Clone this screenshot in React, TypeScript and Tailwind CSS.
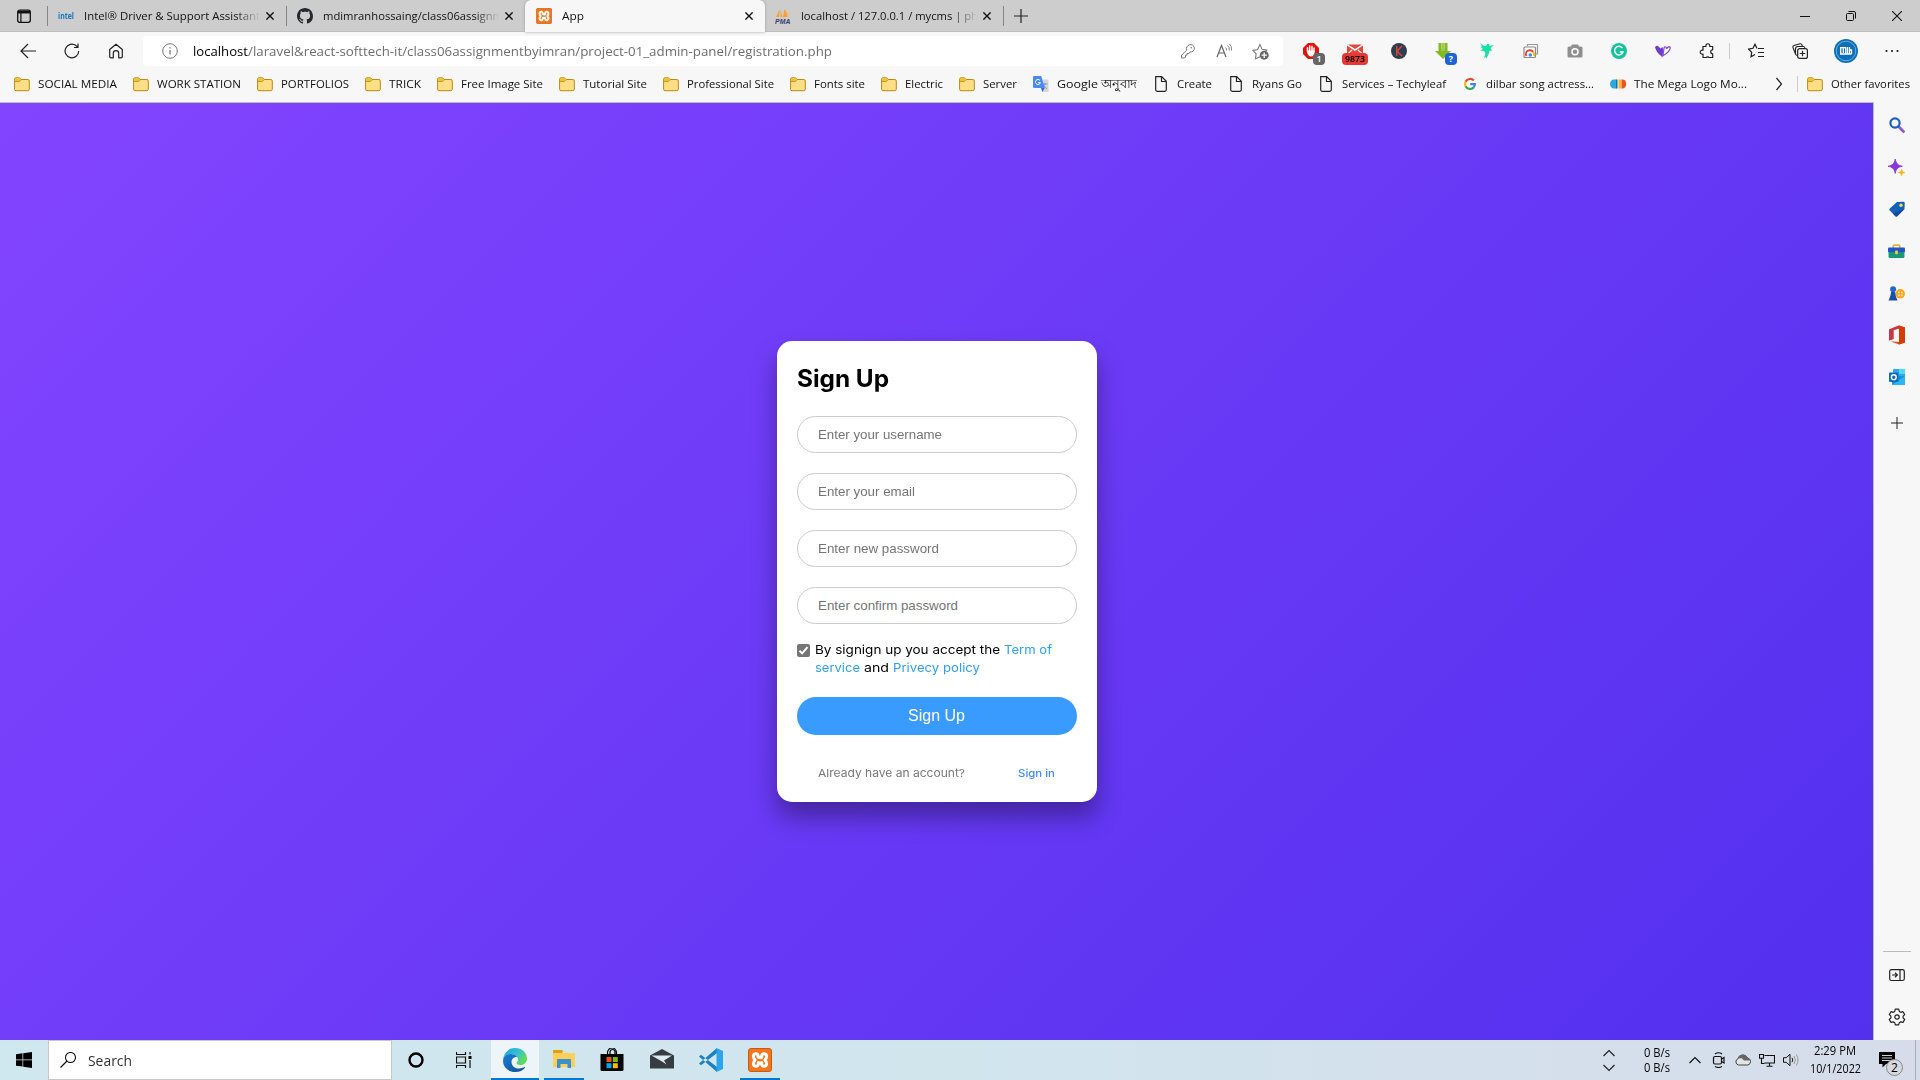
import React, { useLayoutEffect, useRef } from 'react';

type FitProps = { className?: string; children: React.ReactNode };

/** Single line of text, condensed or widened to fill the width its class gives. */
function Fit({ className = '', children }: FitProps) {
  const outer = useRef<HTMLSpanElement>(null);
  const inner = useRef<HTMLSpanElement>(null);
  useLayoutEffect(() => {
    const o = outer.current;
    const i = inner.current;
    if (!o || !i) return;
    i.style.transform = 'none';
    const natural = i.getBoundingClientRect().width;
    if (natural > 0) i.style.transform = `scaleX(${o.getBoundingClientRect().width / natural})`;
  }, []);
  return (
    <span ref={outer} className={`block shrink-0 whitespace-nowrap ${className}`}>
      <span ref={inner} className="inline-block origin-left whitespace-pre">
        {children}
      </span>
    </span>
  );
}

function Svg({ s = 16, vb = '0 0 16 16', className = '', children }: { s?: number; vb?: string; className?: string; children: React.ReactNode }) {
  return (
    <svg width={s} height={s} viewBox={vb} fill="none" className={`shrink-0 ${className}`}>
      {children}
    </svg>
  );
}

const Folder = () => (
  <Svg>
    <path d="M.6 3.2q0-1.4 1.4-1.4h3.4l1.8 1.7h6.6q1.5 0 1.5 1.5v8.3q0 1.4-1.5 1.4H2q-1.4 0-1.4-1.4z" fill="#ffdf85" stroke="#b98a0c" />
    <path d="M1.1 5.2V3.3q0-1 1-1h3.1l1.4 1.4-1.4 1.5z" fill="#f2c037" />
    <path d="M.9 5.5h4.5l1.8-1.8" stroke="#b98a0c" strokeWidth=".8" />
  </Svg>
);

const File = () => (
  <Svg>
    <path d="M2.7.7h6l4.6 4.6v8.5q0 1.5-1.5 1.5H4.2q-1.5 0-1.5-1.5zM8.5.8v4.7h4.7" stroke="#222" strokeWidth="1.2" />
  </Svg>
);

const GoogleG = () => (
  <Svg>
    <circle cx="8" cy="8" r="8" fill="#fff" />
    <path d="M11.8 4.6A5 5 0 0 0 3.6 5.7" stroke="#ea4335" strokeWidth="2.2" />
    <path d="M3.6 5.6a5 5 0 0 0 0 4.8" stroke="#fbbc05" strokeWidth="2.2" />
    <path d="M3.6 10.3a5 5 0 0 0 7.9 1.3" stroke="#34a853" strokeWidth="2.2" />
    <path d="M8.2 8.1H13a5 5 0 0 1-1.6 3.6" stroke="#4285f4" strokeWidth="2.2" />
  </Svg>
);

const Translate = () => (
  <Svg>
    <path d="M6 3.5h9.5V16H9z" fill="#d4d6da" />
    <path d="M9.5 8h5M12 6.8V8c-.4 2-1.4 3.4-3 4.4M10.5 9.5c1 1.5 2 2.4 3.5 3.2" stroke="#8a9bab" />
    <path d="M0 1.2Q0 0 1.2 0h7l3.5 12H1.2Q0 12 0 10.8z" fill="#4a8af4" />
    <path d="m8 12 3.7 0L9.4 16z" fill="#3168d8" />
    <path d="M7 4.5A2.5 2.5 0 1 0 7.4 6.6H5.3" stroke="#fff" />
  </Svg>
);

const MegaLogo = () => (
  <Svg>
    <path d="M5.500 3.500v9H4A4 4.500 0 0 1 4 3.500z" fill="#29a9e0" />
    <path d="M5.500 3.500h2v9h-2z" fill="#0b6fb8" />
    <path d="M8.500 3.500H11v9H8.500z" fill="#fdb813" />
    <path d="M11.500 3.500h1A3.200 4 0 0 1 12.500 12.500h-1z" fill="#f04e23" />
  </Svg>
);

const Xampp = ({ s = 16 }: { s?: number }) => (
  <Svg s={s} vb="0 0 24 24">
    <rect x=".5" y=".5" width="23" height="23" rx="2.500" fill="#f3761c" stroke="#c65c14" />
    <path
      d="M10 8.500V7.300Q9.700 5.800 8 5.800q-2.600 0-2.600 2.700 0 1.500 1.600 3.500-1.600 2-1.600 3.500 0 2.700 2.600 2.700 2 0 2.300-2v-1.700q1.700 1 3.400 0v1.700q.3 2 2.300 2 2.600 0 2.600-2.700 0-1.500-1.600-3.500 1.600-2 1.600-3.500 0-2.700-2.600-2.700-2 0-2.300 2v1.600q-1.700 1-3.700-.4"
      stroke="#fff"
      strokeWidth="3"
      strokeLinejoin="round"
      strokeLinecap="round"
    />
  </Svg>
);

const Github = () => (
  <Svg>
    <path fill="#24292f" d="M8 0C3.580 0 0 3.580 0 8c0 3.540 2.290 6.530 5.470 7.590.4.070.55-.17.55-.38 0-.19-.010-.82-.010-1.490-2.010.37-2.530-.49-2.690-.94-.09-.23-.48-.94-.82-1.130-.28-.15-.68-.52-.010-.53.63-.010 1.080.58 1.230.82.72 1.210 1.870.87 2.330.66.070-.52.28-.87.51-1.070-1.780-.2-3.640-.89-3.640-3.950 0-.87.31-1.590.82-2.150-.08-.2-.36-1.020.08-2.120 0 0 .67-.21 2.200.82.64-.18 1.320-.27 2-.27s1.360.09 2 .27c1.530-1.040 2.200-.82 2.200-.82.44 1.100.16 1.920.08 2.120.51.56.82 1.270.82 2.150 0 3.070-1.870 3.750-3.650 3.950.29.25.54.73.54 1.480 0 1.070-.010 1.930-.010 2.200 0 .21.15.46.55.38A8.010 8.010 0 0 0 16 8c0-4.420-3.580-8-8-8z" />
  </Svg>
);

const Pma = () => (
  <Svg>
    <path d="M4.500 1.500v7.500H1zM5.500 2 7.500 9h-2zM9.500 1c2 2.500 3 5 3 8H8z" fill="#f6a13a" />
    <path d="M12.500 3c1.500 2 2.200 4 2.500 6h-2z" fill="#f9bf74" />
    <text x="0" y="15.500" fontFamily="Liberation Sans" fontWeight="bold" fontStyle="italic" fontSize="6.800" textLength="15.500" fill="#3c3a6b">PMA</text>
  </Svg>
);

const CloseX = ({ className = '' }: { className?: string }) => (
  <Svg s={8} vb="0 0 8 8" className={className}>
    <path d="m.4.4 7.200 7.200M7.600.4.4 7.600" stroke="#111" strokeWidth="1.400" />
  </Svg>
);

function Tab({ icon, label, labelWidth, className = '', gap = 'ml-1.5', fade = true }: { icon: React.ReactNode; label: string; labelWidth: string; className?: string; gap?: string; fade?: boolean }) {
  return (
    <div className={`flex h-8 items-center pl-2.5 ${className}`}>
      {icon}
      <div className={`ml-2.5 w-[176px] ${fade ? '[mask-image:linear-gradient(to_right,black_86%,transparent_100%)]' : ''}`}>
        <Fit className={labelWidth}>{label}</Fit>
      </div>
      <CloseX className={gap} />
    </div>
  );
}

const Sep = ({ className = '' }: { className?: string }) => <div className={`w-px shrink-0 ${className}`} />;

function TabBar() {
  return (
    <div className="flex h-8 items-center bg-[#cdcdcd] shadow-[inset_0_-1px_0_#bfbfbf]">
      <div className="flex w-[47px] pl-4">
        <Svg>
          <rect x="1.700" y="2.200" width="12.600" height="12.100" rx="2" stroke="#111" strokeWidth="1.300" />
          <path d="M2 4.200h12" stroke="#111" strokeWidth="2.500" />
          <path d="M4.900 4v10" stroke="#111" strokeWidth="1.200" />
        </Svg>
      </div>
      <Sep className="h-5 bg-[#858585]" />
      <Tab
        icon={<span className="w-4 text-[8.500px] font-bold text-[#1478be]"><Fit className="w-4">intel</Fit></span>}
        label="Intel® Driver & Support Assistant"
        labelWidth="w-[176px]"
        className="w-[238px]"
      />
      <Sep className="h-5 bg-[#858585]" />
      <Tab icon={<Github />} label="mdimranhossaing/class06assignm" labelWidth="w-[180px]" className="w-[238px]" />
      <Tab icon={<Xampp />} label="App" labelWidth="w-[22px]" gap="ml-[7px]" className="w-[240px] rounded-t-md bg-[#f7f7f7] pl-[11px] shadow-[0_0_3px_#999]" fade={false} />
      <Tab icon={<Pma />} label="localhost / 127.0.0.1 / mycms | ph" labelWidth="w-[177px]" className="w-[238px]" />
      <Sep className="h-5 bg-[#858585]" />
      <Svg className="ml-[9px]">
        <path d="M8 1v14M1 8h14" stroke="#222" strokeWidth="1.200" />
      </Svg>
      <div className="ml-auto flex">
        <div className="flex w-[46px] justify-center"><Svg s={10} vb="0 0 10 10"><path d="M0 5.500h10" stroke="#111" /></Svg></div>
        <div className="flex w-[46px] justify-center">
          <Svg s={10} vb="0 0 10 10"><rect x=".5" y="2.500" width="7" height="7" rx="1" stroke="#111" /><path d="M2.500.5H8q1.500 0 1.500 1.500v5.500" stroke="#111" /></Svg>
        </div>
        <div className="flex w-[46px] justify-center"><Svg s={10} vb="0 0 10 10"><path d="m0 0 10 10M10 0 0 10" stroke="#111" strokeWidth="1.100" /></Svg></div>
      </div>
    </div>
  );
}

function Ext({ children, badge }: { children: React.ReactNode; badge?: React.ReactNode }) {
  return (
    <div className="relative flex h-7 w-11 shrink-0 items-center justify-center">
      {children}
      {badge}
    </div>
  );
}

function Toolbar() {
  return (
    <div className="flex h-[38px] items-center">
      <div className="flex w-[143px] shrink-0 items-center pl-1.5">
        <Ext><Svg><path d="M8 1 1 8l7 7M1 8h15" stroke="#222" strokeWidth="1.200" /></Svg></Ext>
        <Ext><Svg><path d="M14.700 8A6.800 6.800 0 1 1 12 2.600l1.800 1.700M14 .5v4h-4" stroke="#222" strokeWidth="1.200" /></Svg></Ext>
        <Ext><Svg><path d="m8 1.200 6.300 5.300v7q0 1.300-1.300 1.300h-2.300v-4.500a2.700 2.700 0 0 0-5.400 0v4.500H3q-1.300 0-1.300-1.300v-7z" stroke="#222" strokeWidth="1.200" strokeLinejoin="round" /></Svg></Ext>
      </div>
      <div className="flex h-[30px] w-[1140px] shrink-0 items-center rounded bg-white pl-[19px] text-[13.500px]">
        <Svg><circle cx="8" cy="8" r="7.300" stroke="#777" /><path d="M8 7v4.500M8 4.200v1.400" stroke="#777" strokeWidth="1.300" /></Svg>
        <Fit className="ml-[15px] w-[55px] text-black">localhost</Fit>
        <Fit className="w-[584px] text-[#6e6e6e]">/laravel&react-softtech-it/class06assignmentbyimran/project-01_admin-panel/registration.php</Fit>
        <div className="ml-auto flex gap-5 pr-3.5">
          <Svg><path d="M9.500 1.800a3.700 3.700 0 1 1 .8 7.200L8.700 10.500H7v1.700H5.500V14L4.500 15H1.500v-2.700l5.200-5.200a4 4 0 0 1 2.800-5.300z" stroke="#777" /><circle cx="11.300" cy="4.700" r=".8" fill="#777" /></Svg>
          <Svg><path d="M1 14 5.500 2.500 10 14M2.700 10h5.600" stroke="#666" strokeWidth="1.200" /><path d="M9.500 4.500q1.300 1 1 3M11.500 2.500q2.300 1.700 1.800 5M13.500 1q2.700 2.500 2 6.500" stroke="#777" strokeWidth=".9" /></Svg>
          <Svg s={17}><path d="M7.500 13 3.200 15l.7-4.700L.8 7l4.500-.8L7.500 1.500l2 4.500 4.500.7-1.500 1.500" stroke="#777" /><circle cx="11.500" cy="11.500" r="4.200" fill="#666" /><path d="M11.500 9v5M9 11.500h5" stroke="#fff" strokeWidth="1.200" /></Svg>
        </div>
      </div>
      <div className="flex items-center pl-1.5">
        <Ext badge={<span className="absolute top-4 left-6 flex h-3 w-3 items-center justify-center rounded-sm bg-[#666] text-[9px] font-semibold text-white">1</span>}>
          <Svg><path d="M5 0h6l5 5v6l-5 5H5l-5-5V5z" fill="#e3120b" /><path d="M4.500 8V4.800M6.700 8V3M9 8V3.300M11 8.500V5" stroke="#fff" strokeWidth="1.500" strokeLinecap="round" /><path d="M4 7.500h7.800c0 4-1.500 6-3.800 6S4 11 4 7.500z" fill="#fff" /></Svg>
        </Ext>
        <Ext badge={<span className="absolute top-4 left-[9px] flex h-3 w-[26px] items-center justify-center rounded-sm bg-[#e53935] text-[9.500px] font-semibold text-black"><Fit className="w-5">9873</Fit></span>}>
          <Svg><path d="M1 1.500h14L8 6zM0 2.500 8 8l8-5.500V13H0z" fill="#e2483d" /><path d="M0 11.500 5 7M16 11.500 11 7" stroke="#f7f7f7" strokeWidth="1.200" /></Svg>
        </Ext>
        <Ext><Svg><circle cx="8" cy="8" r="8" fill="#2d3e4e" /><path d="M5.700 3v10M11 3 6 8.200l5 4.800" stroke="#d8443c" strokeWidth="1.500" /></Svg></Ext>
        <Ext badge={<span className="absolute top-4 left-6 flex h-3 w-3 items-center justify-center rounded-sm bg-[#1a66d6] text-[9px] font-bold text-white">?</span>}>
          <Svg><path d="M3.500 0h2.800v6H9.700V0h2.800v8H16l-8 8-8-8h3.500z" fill="#82b925" /><path d="M6.300 0h3.400v8H6.300z" fill="#9fce45" /></Svg>
        </Ext>
        <Ext><Svg><path d="m1 0 4 3 2 0 1-2h2l.5 2 4.500-1-3.500 3 1.500 3-2.500-.5-1 4-2.500 4.500 0-2-2 1 1.500-4.500L5 8l-4-.5 3-1.500-2.500-2 1.500-.5z" fill="#15e0a5" /></Svg></Ext>
        <Ext><Svg><path d="M4.500 3V1.500h10V11H13" stroke="#9a9a9a" strokeWidth="1.200" /><rect x="1" y="4" width="11.500" height="10.500" rx="1" fill="#fff" stroke="#8a8a8a" strokeWidth="1.200" /><path d="M3.500 13a3.800 3.800 0 0 1 6.500-4" stroke="#e94335" strokeWidth="2" /><path d="M10 9a4 4 0 0 1 1 4" stroke="#fbbc05" strokeWidth="2" /><circle cx="7.300" cy="12" r="1.800" fill="#4285f4" /></Svg></Ext>
        <Ext><Svg><path d="M5 1.500h6l1 2h2q1.500 0 1.500 1.500v8q0 1.500-1.500 1.500H2Q.5 14.500.5 13V5Q.5 3.500 2 3.500h2z" fill="#8f8f8f" /><circle cx="8" cy="8.800" r="3" stroke="#fff" strokeWidth="1.500" /></Svg></Ext>
        <Ext><Svg><circle cx="8" cy="8" r="8" fill="#15c39a" /><path d="M11.500 5.200A4.300 4.300 0 1 0 12 9H8.800" stroke="#fff" strokeWidth="1.500" /></Svg></Ext>
        <Ext><Svg><path d="M0 4.500Q.7 2.300 3 3L5.500 5.500 7.500 4 8.500 8.500 7.500 13.500Q2.500 11.500 0 4.500z" fill="#6f3bd1" /><path d="M7.500 13C9.300 8.500 8.300 5.500 9.500 4q2-.8 2 2 1.500-3 3.500-2 1.200 4-7.500 9z" stroke="#8050dc" strokeWidth="1.300" fill="#fff" /></Svg></Ext>
        <Ext><Svg><path d="M4 3.500h3a2 2 0 1 1 3.700 0h3v3.300a2 2 0 1 0 0 4v3.700h-3.500a2 2 0 0 0-3 0H4v-3.500a2 2 0 1 1 0-3.700z" stroke="#222" strokeWidth="1.200" strokeLinejoin="round" /></Svg></Ext>
        <Sep className="h-4 bg-[#ccc]" />
        <div className="ml-1 flex items-center">
          <Ext><Svg><path d="M9 5.500 7 1.200 5 5.300l-4.500.8 3.200 3.200-.7 4.500 4-2.300M10 5.500h6M10 9.500h6M10 13.500h6" stroke="#222" strokeWidth="1.200" /></Svg></Ext>
          <Ext><Svg><path d="M3.500 11 1 4.500Q.5 3 2 2.500L8 .8q1.500-.3 2 1.200l.3 1M5 12.500q-1.500-.5-1.500-2V6q0-2.500 2.500-2.500h5.500q1 0 1.500 1.200" stroke="#222" strokeWidth="1.100" /><rect x="5.700" y="5.700" width="9.700" height="9.700" rx="2" fill="#f7f7f7" stroke="#222" strokeWidth="1.200" /><path d="M10.500 7.800v5.500M7.800 10.500h5.500" stroke="#222" strokeWidth="1.200" /></Svg></Ext>
          <div className="flex w-12 justify-center">
            <Svg s={24} vb="0 0 24 24"><circle cx="12" cy="12" r="12" fill="#0d6fb8" /><circle cx="12" cy="12" r="9.800" stroke="#6db5e4" strokeWidth=".9" /><path d="M6.700 15V8.700h2.600V14M9.300 8.700h2.400V15M13.500 8v6.300M15.500 8v6.500M15.500 11h2v4M6 15h11.500" stroke="#fff" strokeWidth="1.300" /></Svg>
          </div>
          <Ext><Svg><circle cx="2.500" cy="8" r="1.100" fill="#222" /><circle cx="8" cy="8" r="1.100" fill="#222" /><circle cx="13.500" cy="8" r="1.100" fill="#222" /></Svg></Ext>
        </div>
      </div>
    </div>
  );
}

const favorites: { icon: () => React.ReactElement; label: string; w: string }[] = [
  { icon: Folder, label: 'SOCIAL MEDIA', w: 'w-[79px]' },
  { icon: Folder, label: 'WORK STATION', w: 'w-[84px]' },
  { icon: Folder, label: 'PORTFOLIOS', w: 'w-[68px]' },
  { icon: Folder, label: 'TRICK', w: 'w-[32px]' },
  { icon: Folder, label: 'Free Image Site', w: 'w-[82px]' },
  { icon: Folder, label: 'Tutorial Site', w: 'w-[64px]' },
  { icon: Folder, label: 'Professional Site', w: 'w-[87px]' },
  { icon: Folder, label: 'Fonts site', w: 'w-[51px]' },
  { icon: Folder, label: 'Electric', w: 'w-[38px]' },
  { icon: Folder, label: 'Server', w: 'w-[34px]' },
  { icon: Translate, label: 'Google অনুবাদ', w: 'w-[80px]' },
  { icon: File, label: 'Create', w: 'w-[35px]' },
  { icon: File, label: 'Ryans Go', w: 'w-[50px]' },
  { icon: File, label: 'Services – Techyleaf', w: 'w-[104px]' },
  { icon: GoogleG, label: 'dilbar song actress...', w: 'w-[108px]' },
  { icon: MegaLogo, label: 'The Mega Logo Mo...', w: 'w-[113px]' },
];

function FavoritesBar() {
  return (
    <div className="flex h-8 items-center pb-[5px] pl-3.5">
      <div className="flex gap-4">
        {favorites.map(({ icon: Icon, label, w }) => (
          <div key={label} className="flex h-5 items-center gap-2">
            <Icon />
            <Fit className={w}>{label}</Fit>
          </div>
        ))}
      </div>
      <Svg className="ml-6"><path d="m5.500 2 5 6-5 6" stroke="#222" strokeWidth="1.200" /></Svg>
      <Sep className="ml-2.5 h-4 bg-[#ccc]" />
      <div className="ml-[9px] flex items-center gap-2">
        <Folder />
        <Fit className="w-[79px]">Other favorites</Fit>
      </div>
    </div>
  );
}

function Field({ placeholder, w }: { placeholder: string; w: string }) {
  return (
    <div className="mb-5 flex h-[37px] items-center rounded-full border border-[#ccc] px-5 font-['Liberation_Sans',sans-serif] text-[13.333px] text-[#757575]">
      <Fit className={w}>{placeholder}</Fit>
    </div>
  );
}

function SignUpCard() {
  return (
    <div className="h-[461px] w-[320px] rounded-[15px] bg-white px-5 pt-5 font-[Inter,sans-serif] shadow-[0_15px_25px_rgba(0,0,0,0.35)]">
      <h1 className="h-[55px] text-[24px] leading-[35px] font-bold text-black">
        <Fit className="w-[92px]">Sign Up</Fit>
      </h1>
      <Field placeholder="Enter your username" w="w-[124px]" />
      <Field placeholder="Enter your email" w="w-[97px]" />
      <Field placeholder="Enter new password" w="w-[121px]" />
      <Field placeholder="Enter confirm password" w="w-[140px]" />
      <div className="-mt-[3px] flex text-[12px] leading-[18px] text-black">
        <span className="mt-[3px] mr-[5px] flex h-[13px] w-[13px] items-center justify-center rounded-[2px] bg-[#767676]">
          <Svg s={11} vb="0 0 11 11"><path d="M1.500 5.700 4.200 8.400 9.500 2.200" stroke="#fff" strokeWidth="2" /></Svg>
        </span>
        <div>
          <div className="flex">
            <Fit className="w-[185px]">By signign up you accept the</Fit>
            <Fit className="ml-1 w-[48px] text-[#2fa0ec]">Term of</Fit>
          </div>
          <div className="flex">
            <Fit className="w-[45px] text-[#2fa0ec]">service</Fit>
            <Fit className="ml-1 w-[25px]">and</Fit>
            <Fit className="ml-1 w-[87px] text-[#2fa0ec]">Privecy policy</Fit>
          </div>
        </div>
      </div>
      <button className="mt-5 flex h-[38px] w-full items-center justify-center rounded-full bg-[#3a9bff] pr-px font-['Liberation_Sans',sans-serif] text-base text-white">
        <Fit className="w-[57px]">Sign Up</Fit>
      </button>
      <div className="mt-[30px] flex justify-between pr-[22px] pl-[21px] text-[11px] leading-4">
        <Fit className="w-[147px] text-[#777]">Already have an account?</Fit>
        <Fit className="w-[37px] font-medium text-[#3b8cff]">Sign in</Fit>
      </div>
    </div>
  );
}

function Sidebar() {
  const cell = 'flex h-[42px] items-center justify-center';
  return (
    <div className="flex w-[47px] flex-col border-l border-[#bdbdbd] bg-[#f7f7f7] pt-0.5 pr-px">
      <div className={cell}><Svg><path d="m9.500 9.500 5 5" stroke="#9155d8" strokeWidth="2.800" strokeLinecap="round" /><circle cx="6" cy="6" r="4.600" stroke="#1b5fc1" strokeWidth="2.200" /></Svg></div>
      <div className={cell}><Svg s={17}><path d="M6.800 0c.7 4.200 2.600 6.100 6.800 6.800-4.200.7-6.100 2.600-6.800 6.800-.7-4.200-2.600-6.100-6.800-6.800C4.200 6.100 6.100 4.200 6.800 0z" fill="#8b35e0" stroke="#8b35e0" strokeWidth=".8" strokeLinejoin="round" /><path d="M12.800 9.500c.6 2.300 1 2.700 3.200 3.300-2.200.6-2.600 1-3.200 3.200-.6-2.200-1-2.600-3.200-3.200 2.200-.6 2.600-1 3.200-3.300z" fill="#f7b315" stroke="#f7b315" strokeWidth=".5" /></Svg></div>
      <div className={cell}><Svg><path d="m8 1 6.500-.3q1.200 0 1.200 1.200L15.500 8l-7 7q-1.200 1-2.300 0L.8 9.600q-1-1.200 0-2.200z" fill="#1261b9" /><path d="m15.500 8-7 7q-1.200 1-2.300 0l-2.500-2.500z" fill="#1648a0" /><circle cx="12" cy="4.200" r="1.700" fill="#ffd75e" /></Svg></div>
      <div className={cell}><Svg s={17}><path d="M5 5V2.800q0-.8 1-.8h4q1 0 1 .8V5" stroke="#e8b12a" strokeWidth="1.600" /><path d="M.5 7h15v6q0 1.200-1.200 1.200H1.700Q.5 14.200.5 13z" fill="#159a73" /><rect y="4.200" width="16" height="4.500" rx="1" fill="#1e58c8" /><rect x="6.700" y="7" width="2.600" height="3.500" rx=".8" fill="#ffc93d" /></Svg></div>
      <div className={cell}><Svg s={17}><circle cx="11.500" cy="8.300" r="4.500" fill="#f7a823" /><circle cx="10.200" cy="7" r=".8" fill="#fff4d5" /><circle cx="13" cy="7" r=".8" fill="#fff4d5" /><circle cx="10.200" cy="9.800" r=".8" fill="#fff4d5" /><circle cx="13" cy="9.800" r=".8" fill="#fff4d5" /><circle cx="4.800" cy="4" r="2.800" fill="#1f66cf" /><path d="M3 6.500h3.600L7.500 11l1.500 3.500H.5L2 11z" fill="#174eb0" /></Svg></div>
      <div className={cell}><Svg s={20} vb="0 0 20 20"><path d="m12 .5 6 2v15l-6 2-8.500-3.300L12 17V3.500L6.500 5v9L2 15.500v-11z" fill="#e64a19" /><path d="m12 .5 6 2v15l-6 2z" fill="#d83b01" /><path d="M2 4.500 12 .5v3L6.500 5v9L2 15.500z" fill="#c33a4c" /></Svg></div>
      <div className={cell}><Svg><path d="M5 0h10q1 0 1 1v8H4V1q0-1 1-1z" fill="#30a8e8" /><path d="M10 0h6v5h-6z" fill="#50d9ff" /><path d="M3 7h13v8q0 1-1 1H4q-1 0-1-1z" fill="#1490df" /><path d="m3 16 13-9v8q0 1-1 1z" fill="#28b9f4" /><rect y="3.500" width="9.500" height="9.500" rx="1" fill="#0f6cbd" /><circle cx="4.800" cy="8.200" r="2.400" stroke="#fff" strokeWidth="1.400" /></Svg></div>
      <div className="flex h-12 items-center justify-center pt-px"><Svg s={14} vb="0 0 14 14"><path d="M7 1v12M1 7h12" stroke="#222" /></Svg></div>
      <div className="mt-auto mb-0.5 ml-[9px] h-px w-7 bg-[#bbb]" />
      <div className={cell}><Svg><rect x=".7" y="2.700" width="14.600" height="10.800" rx="1.800" stroke="#222" strokeWidth="1.200" /><path d="M11 3v10.500M3 8h5M6 5.800 8.300 8 6 10.200" stroke="#222" strokeWidth="1.200" /></Svg></div>
      <div className={`${cell} mb-0.5`}>
        <Svg s={18} vb="0 0 18 18"><path d="M7.300 1.200h3.400l.6 2.200 1.500.9 2.200-.6 1.700 2.900-1.600 1.600v1.700l1.600 1.600-1.700 2.900-2.200-.6-1.500.9-.6 2.100H7.300l-.6-2.100-1.500-.9-2.200.6-1.700-2.900 1.600-1.600V8.200L1.300 6.600 3 3.700l2.200.6 1.500-.9z" stroke="#222" strokeWidth="1.200" strokeLinejoin="round" /><circle cx="9" cy="9" r="2.200" stroke="#222" strokeWidth="1.200" /></Svg>
      </div>
    </div>
  );
}

function Task({ children, className = '' }: { children: React.ReactNode; className?: string }) {
  return <div className={`flex h-10 shrink-0 items-center justify-center ${className}`}>{children}</div>;
}

function Taskbar() {
  return (
    <div className="flex h-10 items-center bg-linear-to-r from-[#cfe7ee] via-[#d1e5ed] to-[#d6dcea] text-black">
      <Task className="w-12"><Svg><path d="m0 2.200 6.500-.9v6.300H0zM7.200 1.200 16 0v7.600H7.200zM0 8.300h6.500v6.300L0 13.700zM7.200 8.300H16V16l-8.800-1.200z" fill="#000" /></Svg></Task>
      <div className="flex h-10 w-[344px] shrink-0 items-center border border-[#c8c8c8] bg-white pl-[11px] text-[14.500px] text-[#333]">
        <Svg><circle cx="10.500" cy="5.500" r="5" stroke="#111" strokeWidth="1.100" /><path d="M7 9 .5 15.500" stroke="#111" strokeWidth="1.200" /></Svg>
        <Fit className="ml-3 w-11 pt-px">Search</Fit>
      </div>
      <Task className="w-12"><Svg><circle cx="8" cy="8" r="6.500" stroke="#000" strokeWidth="2.400" /></Svg></Task>
      <Task className="w-12"><Svg><path d="M.5 0v2.500h9V0M.5 16v-2.500h9V16M.5 5h9v6h-9z" stroke="#111" strokeWidth="1.200" /><path d="M14 0v2.500M14 8v8" stroke="#111" strokeWidth="1.200" /><rect x="12.500" y="4" width="3" height="3" fill="#000" /></Svg></Task>
      <Task className="ml-[3px] w-12 border-b-2 border-[#0078d7] bg-[#edf5f9] pt-0.5">
        <Svg s={24} vb="0 0 24 24">
          <defs>
            <linearGradient id="edgeTop" x1="0" y1="0" x2="1" y2=".5"><stop stopColor="#1b9de2" /><stop offset=".6" stopColor="#35c1d0" /><stop offset="1" stopColor="#5fdc55" /></linearGradient>
            <linearGradient id="edgeLow" x1="0" y1="0" x2="1" y2="1"><stop stopColor="#1b7fd6" /><stop offset="1" stopColor="#0f4f94" /></linearGradient>
          </defs>
          <path d="M.2 11C1 4.500 6 0 12 0c7 0 12 4.800 12 10.500 0 4-3 6.500-6.500 6.500-3 0-4-1-4-1.700 0-.8 1.500-1.500 1.500-3.800C15 8.500 12 6 8 6 4 6 1 8 .2 11z" fill="url(#edgeTop)" />
          <path d="M.1 12C.5 8 4 6 8 6c2.500 0 5 1.200 6.200 3-3-.5-5.700 1.800-5.700 5 0 4 3.500 6.800 8 6.500 2.300-.2 4-1 5-1.500.5-.2.800.2.500.7C20 22.500 16.500 24 12 24 5 24-.5 18.500.1 12z" fill="url(#edgeLow)" />
        </Svg>
      </Task>
      <Task className="ml-[5px] w-10 border-b-2 border-[#0078d7]">
        <Svg s={22} vb="0 0 22 22"><path d="M0 3h9l1.500 2H21q1 0 1 1v13H1q-1 0-1-1z" fill="#ffcf57" /><path d="M0 3q0-1 1-1h8l1 1.500L8.500 5H0z" fill="#dc9f16" /><path d="M4 20v-8q0-1 1-1h12q1 0 1 1v8h-3.500v-4h-7v4z" fill="#3b8ed0" /></Svg>
      </Task>
      <Task className="ml-1 w-12">
        <Svg s={24} vb="0 0 24 24"><path d="M7.500 7V4.500a4.500 4.500 0 0 1 9 0V7M10 6V4a2.500 2.500 0 0 1 5 0v2" stroke="#000" strokeWidth="1.200" /><path d="M.5 6h23v15.500q0 1.500-1.500 1.500H2q-1.500 0-1.500-1.500z" fill="#000" /><path d="M6.500 9h5v5h-5z" fill="#f25022" /><path d="M12.800 9h5v5h-5z" fill="#7fba00" /><path d="M6.500 15.200h5v5h-5z" fill="#00a4ef" /><path d="M12.800 15.200h5v5h-5z" fill="#ffb900" /></Svg>
      </Task>
      <Task className="ml-0.5 w-12"><Svg s={24} vb="0 0 24 24"><path d="M0 7.500 12 1l12 6.500V20.500H0z" fill="#363c40" /><path d="m1.500 7.500 20.500 0-8 5 2.500 4-4-2.800z" fill="#dcebf2" /></Svg></Task>
      <Task className="ml-px w-12"><Svg s={24} vb="0 0 24 24"><path d="m0 8.500 2-1.800L18 19v5zM0 15.500l2 1.800L18 5V0z" fill="#1b80c4" /><path d="m17.500 0 6.500 3v18l-6.500 3z" fill="#2ca5ee" /></Svg></Task>
      <Task className="ml-[5px] w-10 border-b-2 border-[#0078d7] pt-0.5"><Xampp s={24} /></Task>

      <div className="ml-auto flex items-center">
        <div className="flex w-4 flex-col gap-[7px]">
          <svg width="12" height="8" viewBox="0 0 12 8" fill="none"><path d="m.5 7 5.500-5.500L11.500 7" stroke="#222" strokeWidth="1.200" /></svg>
          <svg width="12" height="8" viewBox="0 0 12 8" fill="none"><path d="M.5 1 6 6.500 11.500 1" stroke="#222" strokeWidth="1.200" /></svg>
        </div>
        <div className="ml-[25px] text-[12px] leading-[15px] font-medium"><Fit className="w-[26px]">0 B/s</Fit><Fit className="w-[26px]">0 B/s</Fit></div>
        <svg className="ml-[19px]" width="12" height="8" viewBox="0 0 12 8" fill="none"><path d="m.5 7 5.500-5.500L11.500 7" stroke="#111" strokeWidth="1.200" /></svg>
        <Svg className="ml-2.5"><rect x="2.500" y="4.500" width="8" height="7.500" rx="1.500" stroke="#111" strokeWidth="1.200" /><path d="m10.500 7 2.500-1.500v5.500l-2.500-1.500M4 2Q7.500-.5 11 2M4 14.500q3.500 2 7 0" stroke="#111" strokeWidth="1.200" /></Svg>
        <Svg className="ml-2"><path d="M3.500 13A3.300 3.300 0 0 1 3 6.700 5 5 0 0 1 12.500 6 3.600 3.600 0 0 1 13 13z" fill="#e4e4e4" stroke="#444" /><path d="M3 6.700A5 5 0 0 1 12.500 6q2 .5 2.600 2.500L9 8.500 6.500 6z" fill="#666" /></Svg>
        <Svg className="ml-2"><path d="M5.500 3.500h10v7.500h-10M10.500 11v3M7.500 14.200h6M.5 2.500h4v3.800h-4zM2.500 6.500v5h3" stroke="#111" strokeWidth="1.100" /></Svg>
        <Svg className="ml-2"><path d="M.5 5.700h2.700L7 2.300v11.400L3.200 10.300H.5z" stroke="#111" /><path d="M9 5.800q1.500 2 0 4.400" stroke="#111" /><path d="M11 4q2.800 4 0 8M13.300 2.500q3.500 5.500 0 11" stroke="#999" /></Svg>
        <div className="ml-2.5 flex w-[52px] flex-col items-center text-[12px] leading-[18px]"><Fit className="w-[42px]">2:29 PM</Fit><Fit className="w-[51px]">10/1/2022</Fit></div>
        <div className="relative ml-[18px] h-4 w-[18px]">
          <Svg><path d="M0 0h16v12H7l-3.500 3.500V12H0z" fill="#000" /><path d="M3 3.500h10M3 6h10M3 8.500h10" stroke="#dfe6ee" strokeWidth=".9" /></Svg>
          <span className="absolute top-[7px] left-[7px] flex h-[17px] w-[17px] items-center justify-center rounded-full border border-[#888] bg-[#d5d9df] text-[12px] font-medium">2</span>
        </div>
        <Sep className="mr-1 ml-[18px] h-10 bg-[#a9b0bb]" />
      </div>
    </div>
  );
}

export default function App() {
  return (
    <div className="flex h-[1080px] w-[1920px] flex-col overflow-hidden bg-[#f7f7f7] font-['Open_Sans','Noto_Sans',sans-serif] text-[11.500px] text-[#111]">
      <TabBar />
      <Toolbar />
      <FavoritesBar />
      <div className="flex min-h-0 flex-1">
        <div className="flex w-[1873px] items-center justify-center border-t border-[#bdbdbd] bg-linear-[135deg] from-[#8344ff] to-[#5230ee] pl-px">
          <SignUpCard />
        </div>
        <Sidebar />
      </div>
      <Taskbar />
    </div>
  );
}
